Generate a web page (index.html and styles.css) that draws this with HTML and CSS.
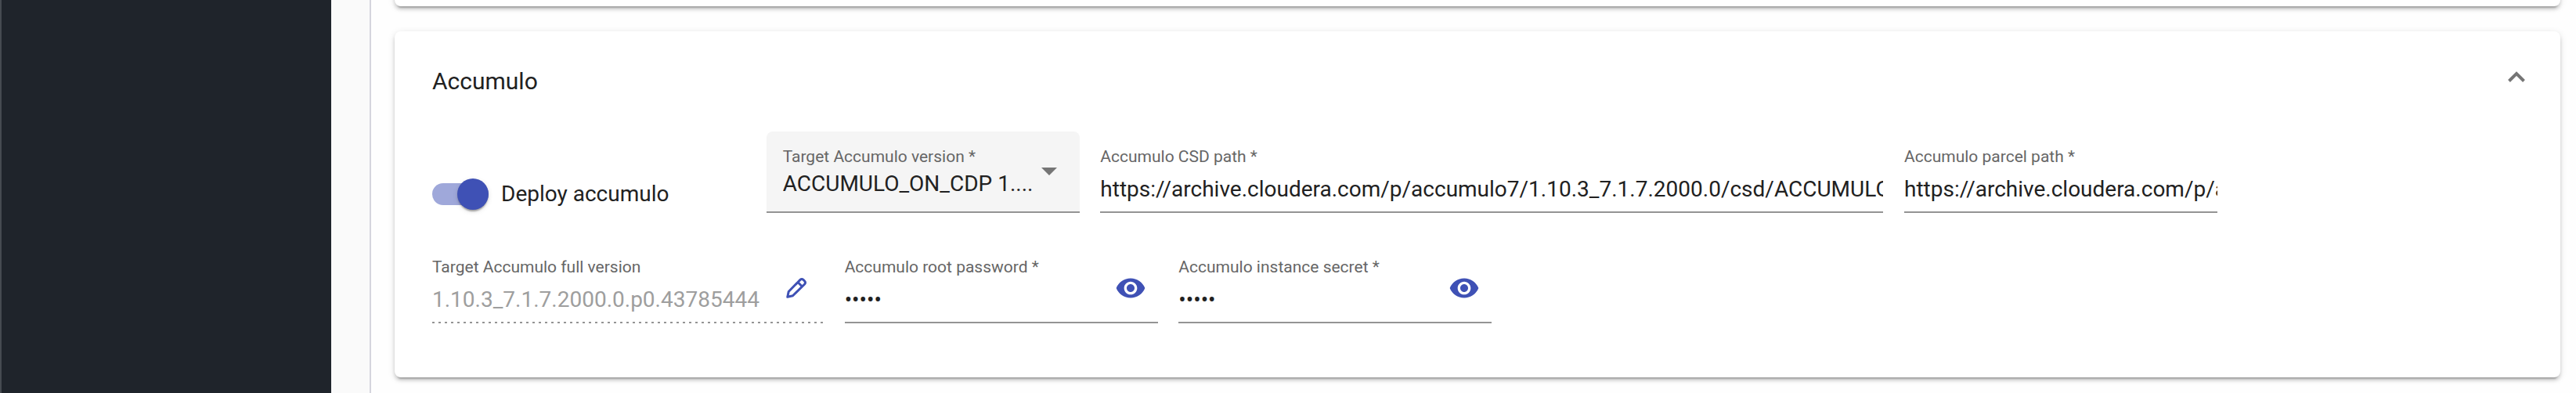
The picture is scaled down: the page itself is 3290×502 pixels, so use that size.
FILE: index.html
```
<!DOCTYPE html>
<html lang="en">
<head>
<meta charset="utf-8">
<title>Accumulo</title>
<link rel="stylesheet" href="styles.css">
</head>
<body>
<div class="app">
  <aside class="sidebar"></aside>
  <div class="gutter"></div>
  <main class="content">
    <section class="card card-previous"></section>
    <section class="card card-main">
      <header class="card-header">
        <h2 class="title">Accumulo</h2>
        <svg class="chevron" viewBox="0 0 24 16" fill="none" stroke="#757575" stroke-width="4"><path d="M2.500 13.500 12 4l9.500 9.500"/></svg>
      </header>
      <div class="row">
        <label class="toggle"><span class="track"><span class="thumb"></span></span><span>Deploy accumulo</span></label>
        <div class="field select">
          <span class="label">Target Accumulo version *</span>
          <span class="value">ACCUMULO_ON_CDP 1....</span>
          <span class="arrow"></span>
        </div>
        <div class="field wide">
          <span class="label">Accumulo CSD path *</span>
          <span class="value">https://archive.cloudera.com/p/accumulo7/1.10.3_7.1.7.2000.0/csd/ACCUMULO</span>
        </div>
        <div class="field">
          <span class="label">Accumulo parcel path *</span>
          <span class="value">https://archive.cloudera.com/p/a</span>
        </div>
      </div>
      <div class="row second">
        <div class="field disabled">
          <span class="label">Target Accumulo full version</span>
          <span class="value">1.10.3_7.1.7.2000.0.p0.43785444</span>
          <svg class="pencil" viewBox="0 0 28 28" fill="none" stroke="#3f51b5" stroke-width="3" stroke-linejoin="round"><path d="M2.800 25.300 4.200 18.500 19 3.400Q21 1.600 23 3.400L24.600 5Q26.400 7 24.600 9L9.500 23.800Z"/><path d="M16 6.500l5.500 5.500"/></svg>
        </div>
        <div class="field">
          <span class="label">Accumulo root password *</span>
          <span class="value">•••••</span>
          <svg class="eye" viewBox="0 0 24 24" fill="#3f51b5"><path d="M12 4.500C7 4.500 2.730 7.610 1 12c1.730 4.390 6 7.500 11 7.500s9.270-3.110 11-7.500c-1.730-4.390-6-7.500-11-7.500zM12 17c-2.760 0-5-2.240-5-5s2.240-5 5-5 5 2.240 5 5-2.240 5-5 5zm0-8c-1.660 0-3 1.340-3 3s1.340 3 3 3 3-1.340 3-3-1.340-3-3-3z"/></svg>
        </div>
        <div class="field">
          <span class="label">Accumulo instance secret *</span>
          <span class="value">•••••</span>
          <svg class="eye" viewBox="0 0 24 24" fill="#3f51b5"><path d="M12 4.500C7 4.500 2.730 7.610 1 12c1.730 4.390 6 7.500 11 7.500s9.270-3.110 11-7.500c-1.730-4.390-6-7.500-11-7.500zM12 17c-2.760 0-5-2.240-5-5s2.240-5 5-5 5 2.240 5 5-2.240 5-5 5zm0-8c-1.660 0-3 1.340-3 3s1.340 3 3 3 3-1.340 3-3-1.340-3-3-3z"/></svg>
        </div>
      </div>
    </section>
  </main>
</div>
</body>
</html>
```
FILE: styles.css
```
* { box-sizing: border-box; }
body { margin: 0; font-family: Roboto, sans-serif; color: #212121; }
.app { display: flex; height: 502px; overflow: hidden; background: #fefefe; }
.sidebar { width: 423px; flex: none; background: #1f242b; border-left: 2px solid #464b51; }
.gutter { width: 51px; flex: none; background: #fafafa; border-right: 2px solid #d5d5dd; }
.content { flex: 1; min-width: 0; padding: 0 20px 0 30px; }
.card {
  background: #fff;
  border-radius: 8px;
  box-shadow: 0 6px 2px -4px rgba(0,0,0,.2), 0 4px 4px 0 rgba(0,0,0,.14), 0 2px 10px 0 rgba(0,0,0,.12);
}
.card-previous { height: 28px; margin-top: -20px; margin-bottom: 32px; }
.card-main { height: 442px; padding: 0 44px 0 48px; }
.card-header { height: 128px; display: flex; align-items: center; justify-content: space-between; }
.title { margin: 0; font-size: 30px; font-weight: 400; line-height: 40px; }
.chevron { width: 24px; height: 16px; margin-bottom: 12px; }
.row { display: flex; gap: 26.67px; height: 104px; }
.second { margin-top: 37px; }
.toggle { width: 400px; display: flex; align-items: center; gap: 16px; padding-top: 56px; height: 104px; font-size: 28px; line-height: 48px; }
.track { width: 72px; height: 28px; border-radius: 14px; background: #9fa8da; display: flex; align-items: center; justify-content: flex-end; }
.thumb { width: 40px; height: 40px; flex: none; border-radius: 50%; background: #3f51b5; box-shadow: 0 4px 2px -2px rgba(0,0,0,.2), 0 2px 2px rgba(0,0,0,.14), 0 2px 6px rgba(0,0,0,.12); }
.field { position: relative; width: 400px; flex: none; height: 104px; padding-top: 19px; border-bottom: 2px solid #949494; display: flex; flex-direction: column; }
.wide { width: 1000px; }
.label { font-size: 21px; line-height: 26px; color: #666; white-space: nowrap; }
.value { font-size: 28px; line-height: 34px; margin-top: 12px; white-space: nowrap; overflow: hidden; }
.select { background: #f5f5f5; border-radius: 8px 8px 0 0; padding-left: 21px; }
.select .value { margin-top: 5px; }
.arrow { position: absolute; right: 29px; top: 46px; border: 10px solid transparent; border-top-color: #757575; border-bottom: 0; }
.disabled { width: 500px; border-bottom: 0; background: repeating-linear-gradient(90deg, #949494 0 3px, transparent 3px 8px) 0 100% / 100% 2px no-repeat; }
.disabled .value { color: #9e9e9e; }
.pencil { position: absolute; left: 451px; top: 45px; width: 28px; height: 28px; }
.eye { position: absolute; right: 15px; top: 39px; width: 40px; height: 40px; }
```
